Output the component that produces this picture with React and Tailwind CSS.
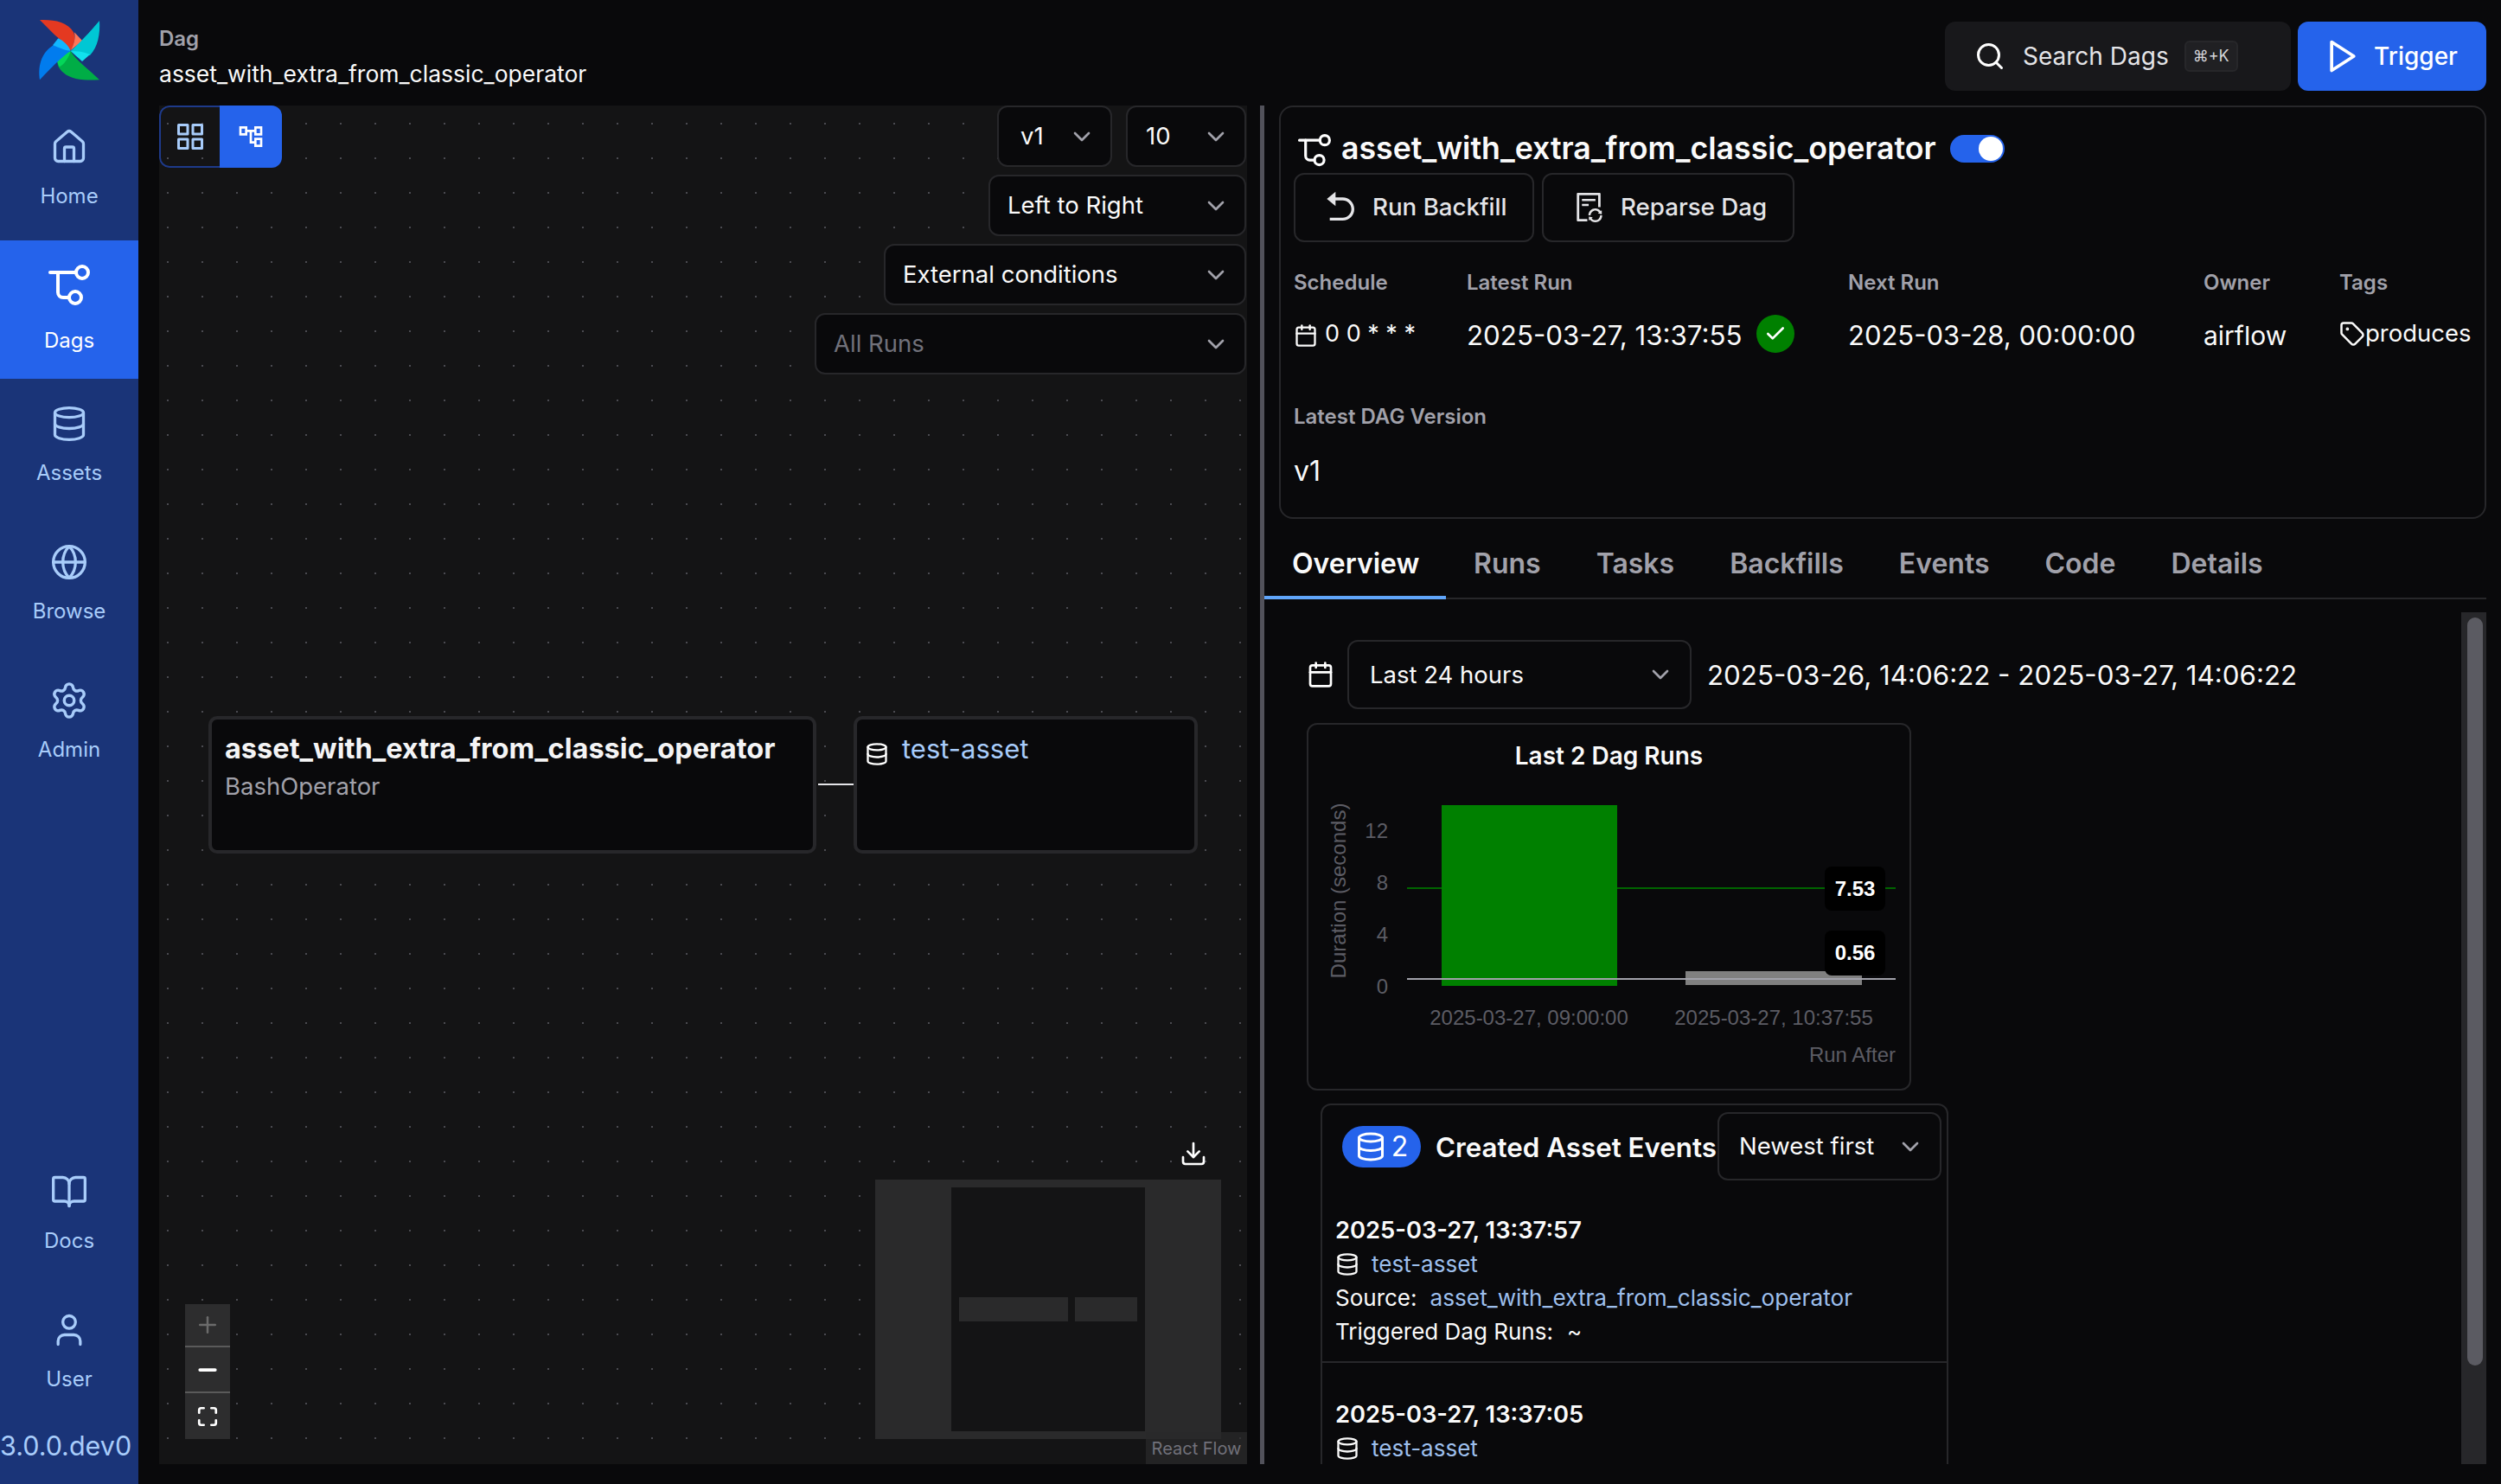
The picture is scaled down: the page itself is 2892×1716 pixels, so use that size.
import React from "react";
import { House, Database, Globe, Settings, BookOpen, User, Search, Calendar, Tag, Check, Download, ChevronDown, Plus, Minus, Maximize } from "lucide-react";
import { AiOutlineFileSync } from "react-icons/ai";
import { MdOutlineAccountTree } from "react-icons/md";
import { FiGrid, FiPlay } from "react-icons/fi";
import { RiArrowGoBackFill } from "react-icons/ri";

function DagIcon({ size = 48, className = "" }) {
  return (
    <svg width={size} height={size} viewBox="0 0 24 24" fill="none" stroke="currentColor" strokeWidth="2" strokeLinecap="round" strokeLinejoin="round" className={className}>
      <circle cx="19.5" cy="4.5" r="3.5" />
      <circle cx="15.5" cy="19" r="3.5" />
      <path d="M1 4.5H16" />
      <path d="M5.5 4.5V16a3 3 0 0 0 3 3H12" />
    </svg>
  );
}

function Logo() {
  return (
    <svg width="100" height="100" viewBox="0 0 300 300" className="shrink-0">
      <path d="M48 42C95 40 145 48 165 85C172 100 170 125 155 148C140 125 115 108 98 92Z" fill="#e43921" />
      <path d="M168 85L196 115L155 148C168 125 172 105 168 85Z" fill="#ff7557" />
      <path d="M255 45C258 90 250 135 222 165L155 150C180 130 225 80 255 45Z" fill="#00c7d4" />
      <path d="M155 150C178 150 200 152 222 162L195 186C180 172 165 160 155 150Z" fill="#11e1ee" />
      <path d="M255 250C210 252 160 252 130 225C115 212 108 198 110 185L155 150C170 180 220 215 255 250Z" fill="#00ad46" />
      <path d="M108 186C118 168 135 155 155 150C150 172 130 200 116 205Z" fill="#04d659" />
      <path d="M48 250C42 210 48 160 95 130L155 150C130 165 85 210 48 250Z" fill="#017cee" />
      <path d="M93 130L112 106C130 115 148 130 155 150C135 148 112 138 93 130Z" fill="#11b6ff" />
    </svg>
  );
}

function NavItem({ icon, label, active, gap = "gap-[19px] pb-[5px]" }) {
  return (
    <div className={`h-40 w-40 shrink-0 flex flex-col items-center justify-center ${gap} ${active ? "bg-[#2563eb] text-white" : "text-[#a8ccfa]"}`}>
      {icon}
      <span className="text-2xl leading-8 font-normal">{label}</span>
    </div>
  );
}

function Sel({ label, w, dim, pl = "pl-[20px]" }) {
  return (
    <div className={`h-[71px] shrink-0 flex items-center justify-between ${pl} pr-[17px] bg-[#09090b] border-2 border-[#27272a] rounded-xl text-[27.5px] ${w} ${dim ? "text-[#71717a]" : "text-[#fafafa]"}`}>
      <span>{label}</span>
      <ChevronDown size={32} className="text-[#a1a1aa]" strokeWidth={2} />
    </div>
  );
}

function Canvas() {
  return (
    <div className="relative w-[1258px] h-full shrink-0 overflow-hidden bg-[#141415] bg-[radial-gradient(#4a4a50_1px,transparent_1.5px)] bg-[size:40px_40px] bg-[position:-10px_1px]">
      <div className="absolute left-0 top-0 flex h-[72px] rounded-xl overflow-hidden">
        <div className="w-[70px] flex items-center justify-center border-2 border-r-0 border-[#1e3a8a] rounded-l-xl text-[#a8ccfa]"><FiGrid size={36} /></div>
        <div className="w-[72px] flex items-center justify-center bg-[#2563eb] text-white"><MdOutlineAccountTree size={32} /></div>
      </div>

      <div className="absolute right-[1px] top-0 flex flex-col items-end gap-[9px]">
        <div className="flex gap-4">
          <Sel label="v1" w="w-[133px]" pl="pl-[25px]" />
          <Sel label="10" w="w-[139px]" pl="pl-[21px]" />
        </div>
        <Sel label="Left to Right" w="w-[298px]" />
        <Sel label="External conditions" w="w-[419px]" />
        <Sel label="All Runs" w="w-[499px]" dim />
      </div>

      <div className="absolute left-[57px] top-[706px] w-[703px] h-[159px] bg-[#09090b] border-4 border-[#27272a] rounded-[10px] px-[15px] pt-[14px]">
        <div className="text-[32.5px] leading-10 font-bold text-[#f4f4f5] whitespace-nowrap">asset_with_extra_from_classic_operator</div>
        <div className="text-[27.5px] leading-9 text-[#a1a1aa] mt-[5px]">BashOperator</div>
      </div>
      <div className="absolute left-[762px] top-[784px] w-[42px] h-[2px] bg-[#e4e4e7]" />
      <div className="absolute left-[803px] top-[706px] w-[398px] h-[159px] bg-[#09090b] border-4 border-[#27272a] rounded-[10px] flex items-start pl-[9px] pt-[14px] gap-[15px]">
        <Database size={28} className="text-white mt-[12px] shrink-0" />
        <span className="text-[31px] leading-10 text-[#a8ccfa]">test-asset</span>
      </div>

      <Download size={32} className="absolute left-[1180px] top-[1196px] text-white" />

      <div className="absolute left-[828px] top-[1242px] w-[400px] h-[300px] bg-[#2a2a2b]">
        <div className="absolute left-[88px] top-[9px] w-[224px] h-[282px] bg-[#141415]">
          <div className="absolute left-[9px] top-[127px] w-[126px] h-[28px] bg-[#2a2a2b]" />
          <div className="absolute left-[143px] top-[127px] w-[72px] h-[28px] bg-[#2a2a2b]" />
        </div>
      </div>

      <div className="absolute left-[30px] top-[1386px] w-[52px] flex flex-col bg-[#2d2d2e]">
        <div className="h-[50px] flex items-center justify-center border-b-2 border-[#5a5a5a] text-[#6b6b6b]"><Plus size={30} strokeWidth={2} /></div>
        <div className="h-[53px] flex items-center justify-center border-b-2 border-[#5a5a5a] text-white"><Minus size={30} strokeWidth={3} /></div>
        <div className="h-[53px] flex items-center justify-center text-white"><Maximize size={26} strokeWidth={2.5} /></div>
      </div>

      <div className="absolute right-0 bottom-0 w-[117px] h-[37px] bg-[#2a2a2b]/70 flex items-center justify-center text-xl text-[#71717a]">React Flow</div>
    </div>
  );
}

function MiniLabel({ children }) {
  return <div className="h-10 flex items-center text-2xl font-semibold text-[#a1a1aa] whitespace-nowrap">{children}</div>;
}

function HeaderCard() {
  return (
    <div className="ml-[17px] h-[478px] shrink-0 border-2 border-[#27272a] rounded-2xl px-[15px]">
      <div className="h-[76px] flex items-center pt-[20px]">
        <DagIcon size={38} className="text-white ml-[5px] mr-[12px] mt-[4px]" />
        <span className="text-[35.7px] font-semibold text-[#fafafa] whitespace-nowrap">asset_with_extra_from_classic_operator</span>
        <div className="ml-[16px] w-[63px] h-8 rounded-full bg-[#2563eb] flex items-center justify-end pr-[2px]">
          <div className="w-[28px] h-[28px] rounded-full bg-white" />
        </div>
      </div>
      <div className="flex gap-[9px] h-20 mt-0">
        <div className="w-[278px] border-2 border-[#27272a] rounded-xl flex items-center pl-[33px] gap-[16px] text-[27.7px] font-medium text-[#e4e4e7]">
          <RiArrowGoBackFill size={40} />
          <span>Run Backfill</span>
        </div>
        <div className="w-[292px] border-2 border-[#27272a] rounded-xl flex items-center pl-[33px] gap-[16px] text-[27.7px] font-medium text-[#e4e4e7]">
          <AiOutlineFileSync size={40} />
          <span>Reparse Dag</span>
        </div>
      </div>
      <div className="flex mt-[27px]">
        <div className="w-[200px]">
          <MiniLabel>Schedule</MiniLabel>
          <div className="mt-[21px] h-10 flex items-center gap-2 text-[#fafafa] text-[27px] whitespace-nowrap"><Calendar size={28} /><span className="-mt-1">0 0 * * *</span></div>
        </div>
        <div className="w-[441px]">
          <MiniLabel>Latest Run</MiniLabel>
          <div className="mt-[21px] h-10 flex items-center gap-4 text-[31.3px] text-[#fafafa] whitespace-nowrap">
            <span>2025-03-27, 13:37:55</span>
            <div className="w-11 h-11 -mt-1 rounded-full bg-[#008000] flex items-center justify-center text-white"><Check size={26} strokeWidth={2.5} /></div>
          </div>
        </div>
        <div className="w-[411px]">
          <MiniLabel>Next Run</MiniLabel>
          <div className="mt-[21px] h-10 flex items-center text-[31px] text-[#fafafa] whitespace-nowrap">2025-03-28, 00:00:00</div>
        </div>
        <div className="w-[157px]">
          <MiniLabel>Owner</MiniLabel>
          <div className="mt-[21px] h-10 flex items-center text-[30px] text-[#fafafa]">airflow</div>
        </div>
        <div>
          <MiniLabel>Tags</MiniLabel>
          <div className="mt-[21px] h-10 flex items-center -translate-y-0.5 text-[27.5px] text-[#fafafa]"><Tag size={30} /><span>produces</span></div>
        </div>
      </div>
      <div className="mt-[54px]"><MiniLabel>Latest DAG Version</MiniLabel></div>
      <div className="mt-[23px] h-10 flex items-center text-[32px] text-[#fafafa]">v1</div>
    </div>
  );
}

function Tabs() {
  const tabs = ["Overview", "Runs", "Tasks", "Backfills", "Events", "Code", "Details"];
  return (
    <div className="h-[93px] shrink-0 flex items-end border-b-2 border-[#27272a]">
      {tabs.map((t, i) => (
        <div key={t} className={`h-full px-8 pt-[30px] -mb-[2px] text-[32px] leading-10 font-semibold border-b-4 whitespace-nowrap ${i === 0 ? "text-[#fafafa] border-[#60a5fa] w-[210px]" : "text-[#a1a1aa] border-transparent"}`}>{t}</div>
      ))}
    </div>
  );
}

function Chart() {
  const muted = "#5c5c64";
  const font = "'Liberation Sans', sans-serif";
  return (
    <div className="ml-[49px] mt-4 w-[699px] h-[425px] border-2 border-[#27272a] rounded-xl flex flex-col shrink-0">
      <div className="h-[80px] pt-[18px] text-center text-[28px] leading-9 font-semibold text-[#fafafa]">Last 2 Dag Runs</div>
      <svg width="695" height="341" viewBox="1513 918 695 341" fontFamily={font}>
        <text transform="translate(1556 1030) rotate(-90)" textAnchor="middle" fontSize="24" fill={muted}>Duration (seconds)</text>
        <g fontSize="24" fill={muted} textAnchor="end">
          <text x="1605" y="969">12</text>
          <text x="1605" y="1029">8</text>
          <text x="1605" y="1089">4</text>
          <text x="1605" y="1149">0</text>
        </g>
        <rect x="1627" y="1026" width="565" height="2" fill="#006400" />
        <rect x="1667" y="931" width="203" height="209" fill="#008000" />
        <rect x="1949" y="1123" width="204" height="16" fill="#808080" />
        <rect x="1627" y="1131" width="565" height="2" fill="#a1a1aa" />
        <rect x="2110" y="1002" width="70" height="51" rx="8" fill="#000" />
        <rect x="2110" y="1076" width="70" height="52" rx="8" fill="#000" />
        <text x="2145" y="1036" fontSize="24" fontWeight="700" fill="#fff" textAnchor="middle">7.53</text>
        <text x="2145" y="1110" fontSize="24" fontWeight="700" fill="#fff" textAnchor="middle">0.56</text>
        <text x="1768" y="1185" fontSize="24" fill={muted} textAnchor="middle">2025-03-27, 09:00:00</text>
        <text x="2051" y="1185" fontSize="24" fill={muted} textAnchor="middle">2025-03-27, 10:37:55</text>
        <text x="2192" y="1228" fontSize="24" fill={muted} textAnchor="end">Run After</text>
      </svg>
    </div>
  );
}

function EventItem({ date, full }) {
  return (
    <div className={`px-[15px] text-[26px] text-[#fafafa] ${full ? "pt-[39px] pb-[15px] border-b-2 border-[#27272a]" : "pt-[41px]"}`}>
      <div className="h-[38px] flex items-center text-[27.3px] font-semibold whitespace-nowrap">{date}</div>
      <div className="h-[39px] flex items-center gap-[14px]">
        <Database size={28} />
        <span className="text-[#9dbfec]">test-asset</span>
      </div>
      {full && (
        <>
          <div className="h-[39px] flex items-center gap-[15px] whitespace-nowrap"><span>Source:</span><span className="text-[#9dbfec] text-[26.2px]">asset_with_extra_from_classic_operator</span></div>
          <div className="h-[39px] flex items-center gap-4 whitespace-nowrap"><span>Triggered Dag Runs:</span><span>~</span></div>
        </>
      )}
    </div>
  );
}

function Events() {
  return (
    <div className="ml-[65px] mt-[15px] w-[726px] border-2 border-[#27272a] rounded-t-xl shrink-0">
      <div className="flex items-start pl-[23px] pt-[8px] pr-[6px]">
        <div className="mt-[16px] w-[91px] h-12 shrink-0 rounded-full bg-[#2563eb] flex items-center justify-center gap-[6px] text-[32px] text-white"><Database size={36} />2</div>
        <div className="mt-[17px] ml-[17px] h-12 flex items-center text-[31.3px] font-semibold text-[#fafafa] whitespace-nowrap">Created Asset Events</div>
        <div className="ml-auto w-[259px] h-[79px] shrink-0 border-2 border-[#27272a] rounded-xl flex items-center justify-between pl-[23px] pr-[18px] text-[27.5px] text-[#fafafa]">
          <span>Newest first</span>
          <ChevronDown size={32} className="text-[#a1a1aa]" />
        </div>
      </div>
      <EventItem date="2025-03-27, 13:37:57" full />
      <EventItem date="2025-03-27, 13:37:05" />
      <div className="h-40" />
    </div>
  );
}

export default function App() {
  return (
    <div className="w-[2892px] h-[1716px] flex overflow-hidden bg-[#09090b] font-['Inter','Liberation_Sans',sans-serif]">
      <aside className="w-40 h-full shrink-0 flex flex-col bg-[#1a3478]">
        <div className="h-[118px] shrink-0 flex items-center justify-center"><Logo /></div>
        <NavItem icon={<House size={44} strokeWidth={1.8} />} label="Home" />
        <NavItem icon={<DagIcon size={48} />} label="Dags" active gap="gap-6" />
        <NavItem icon={<Database size={44} strokeWidth={1.8} />} label="Assets" />
        <NavItem icon={<Globe size={44} strokeWidth={1.8} />} label="Browse" />
        <NavItem icon={<Settings size={46} strokeWidth={1.8} className="-my-px" />} label="Admin" />
        <div className="flex-1" />
        <NavItem icon={<BookOpen size={44} strokeWidth={1.8} />} label="Docs" />
        <NavItem icon={<User size={44} strokeWidth={1.8} />} label="User" />
        <div className="h-[70px] shrink-0 flex items-center pb-[18px] text-[30.5px] text-[#a8ccfa] whitespace-nowrap">3.0.0.dev0</div>
      </aside>

      <main className="flex-1 h-full flex flex-col pl-6 pr-[17px]">
        <header className="h-[122px] shrink-0 flex items-start justify-between">
          <div className="pt-[29px]">
            <div className="text-2xl leading-8 font-semibold text-[#a1a1aa]">Dag</div>
            <div className="text-[26.5px] leading-10 mt-[4px] text-[#fafafa] whitespace-nowrap">asset_with_extra_from_classic_operator</div>
          </div>
          <div className="flex gap-2 pt-[25px]">
            <div className="w-[400px] h-20 rounded-xl bg-[#18181b] flex items-center pl-[34px] text-[28px] text-[#e4e4e7]">
              <Search size={36} className="text-white mr-[20px]" />
              <span className="mr-[18px]">Search Dags</span>
              <span className="h-9 px-2 rounded-md border-2 border-[#27272a] bg-[#202023] flex items-center text-lg text-[#d4d4d8]">⌘+K</span>
            </div>
            <div className="w-[218px] h-20 rounded-xl bg-[#2563eb] flex items-center pl-[30px] gap-[14px] text-[28px] font-medium text-white">
              <FiPlay size={44} />
              <span>Trigger</span>
            </div>
          </div>
        </header>

        <div className="h-[1571px] shrink-0 flex">
          <Canvas />
          <div className="ml-[15px] w-[5px] h-full shrink-0 bg-[#52525b]" />
          <div className="flex-1 h-full flex flex-col min-w-0">
            <HeaderCard />
            <Tabs />
            <div className="relative flex-1 min-h-0 overflow-hidden flex flex-col">
              <div className="absolute right-0 top-[15px] bottom-0 w-[29px] bg-[#27272a]">
                <div className="absolute left-[7px] top-[6px] w-[18px] h-[865px] rounded-full bg-[#5b5b62]" />
              </div>
              <div className="mt-[47px] flex items-center shrink-0">
                <Calendar size={32} className="ml-[49px] mr-[15px] text-white" />
                <div className="w-[398px] h-20 border-2 border-[#27272a] rounded-xl flex items-center justify-between pl-[24px] pr-[18px] text-[27.5px] text-[#fafafa]">
                  <span className="translate-y-px">Last 24 hours</span>
                  <ChevronDown size={32} className="text-[#a1a1aa]" />
                </div>
                <span className="ml-[18px] translate-y-px text-[31.3px] text-[#fafafa] whitespace-nowrap">2025-03-26, 14:06:22 - 2025-03-27, 14:06:22</span>
              </div>
              <Chart />
              <Events />
            </div>
          </div>
        </div>
      </main>
    </div>
  );
}
